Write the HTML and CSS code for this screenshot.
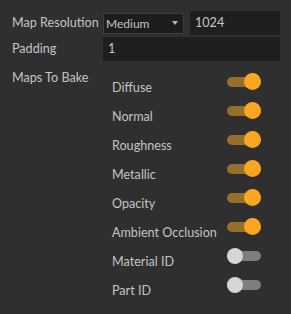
FILE: index.html
```html
<!DOCTYPE html>
<html lang="en">
<head>
    <meta charset="UTF-8">
    <title>Bake Settings</title>
    <link rel="stylesheet" href="styles.css">
</head>
<body>
    <div class="panel">
        <div class="row">
            <div class="label">Map Resolution</div>
            <div class="controls">
                <div class="select">
                    <span>Medium</span>
                    <span class="caret"></span>
                </div>
                <div class="field field-short">1024</div>
            </div>
        </div>
        <div class="row">
            <div class="label">Padding</div>
            <div class="field field-wide">1</div>
        </div>
        <div class="maps">
            <div class="label maps-label">Maps To Bake</div>
            <ul class="map-list">
                <li class="map"><span class="map-name">Diffuse</span><span class="toggle on"></span></li>
                <li class="map"><span class="map-name">Normal</span><span class="toggle on"></span></li>
                <li class="map"><span class="map-name">Roughness</span><span class="toggle on"></span></li>
                <li class="map"><span class="map-name">Metallic</span><span class="toggle on"></span></li>
                <li class="map"><span class="map-name">Opacity</span><span class="toggle on"></span></li>
                <li class="map"><span class="map-name">Ambient Occlusion</span><span class="toggle on"></span></li>
                <li class="map"><span class="map-name">Material ID</span><span class="toggle"></span></li>
                <li class="map"><span class="map-name">Part ID</span><span class="toggle"></span></li>
            </ul>
        </div>
    </div>
</body>
</html>
```

FILE: styles.css
```css
body {
    margin: 0;
    background-color: #2f2f2f;
    color: #c4c4c4;
    font-family: 'Lato', 'Liberation Sans', sans-serif;
    font-size: 12.6px;
}

.panel {
    padding: 11px 11px 0 12px;
}

.row {
    display: flex;
    align-items: center;
    height: 24px;
    margin-bottom: 2px;
}

.label {
    width: 91px;
    flex-shrink: 0;
    line-height: 18px;
}

.maps-label {
    padding-top: 1px;
}

.controls {
    display: flex;
    align-items: center;
    gap: 6px;
}

.select {
    box-sizing: border-box;
    width: 81px;
    height: 21px;
    display: flex;
    align-items: center;
    justify-content: space-between;
    padding: 0 5px 0 2px;
    background-color: #1d1d1d;
    border: 1px solid #3d3d3d;
    font-size: 12px;
}

.caret {
    width: 0;
    height: 0;
    border-left: 3.5px solid transparent;
    border-right: 3.5px solid transparent;
    border-top: 4px solid #b4b4b4;
}

.field {
    box-sizing: border-box;
    height: 24px;
    line-height: 24px;
    padding-left: 5px;
    background-color: #1f1f1f;
}

.field-short {
    width: 90px;
}

.field-wide {
    width: 177px;
}

.maps {
    display: flex;
    align-items: flex-start;
    margin-top: 7px;
}

.map-list {
    list-style: none;
    margin: 0 0 0 9px;
    padding: 5px 0 0 0;
}

.map {
    display: flex;
    align-items: flex-start;
    height: 29px;
}

.map-name {
    width: 115px;
    line-height: 18px;
    margin-top: 6px;
}

.toggle {
    position: relative;
    width: 34px;
    height: 18px;
}

.toggle::before {
    content: '';
    position: absolute;
    left: 0;
    top: 4px;
    width: 34px;
    height: 10px;
    border-radius: 5px;
    background-color: #7e7e7e;
}

.toggle::after {
    content: '';
    position: absolute;
    left: 0;
    top: 1px;
    width: 16px;
    height: 16px;
    border-radius: 50%;
    background-color: #d5d5d5;
}

.toggle.on::before {
    background-color: #96702b;
}

.toggle.on::after {
    left: auto;
    right: 0;
    top: 0;
    width: 17px;
    height: 17px;
    background-color: #fba622;
}
```
